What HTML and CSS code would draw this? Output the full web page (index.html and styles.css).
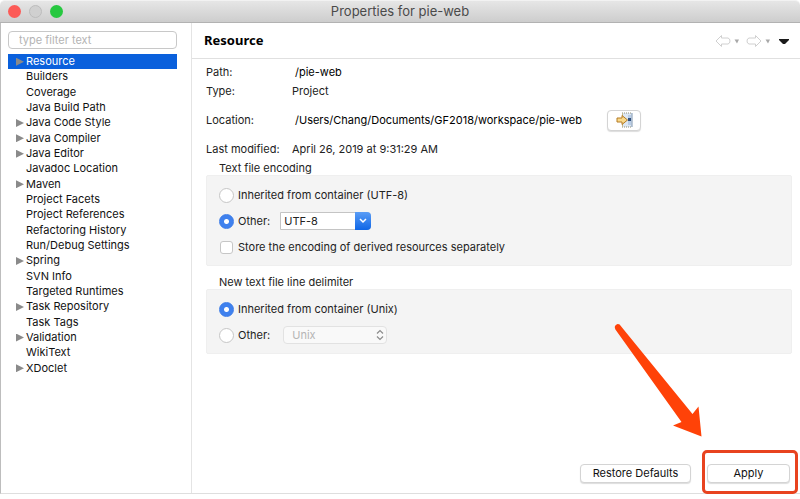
FILE: index.html
```html
<!DOCTYPE html>
<html lang="en">
<head>
  <meta charset="UTF-8">
  <meta name="viewport" content="width=device-width, initial-scale=1.0">
  <title>Properties for pie-web</title>
  <link rel="stylesheet" href="styles.css">
</head>
<body>
  <div class="window">
    <header class="titlebar">
      <div class="lights">
        <span class="light close"></span>
        <span class="light minimize"></span>
        <span class="light zoom"></span>
      </div>
      <h1 class="title">Properties for pie-web</h1>
    </header>

    <div class="content">
      <nav class="sidebar">
        <input class="filter" type="text" placeholder="type filter text" aria-label="type filter text">
        <ul class="tree">
          <li class="node parent selected">Resource</li>
          <li class="node">Builders</li>
          <li class="node">Coverage</li>
          <li class="node">Java Build Path</li>
          <li class="node parent">Java Code Style</li>
          <li class="node parent">Java Compiler</li>
          <li class="node parent">Java Editor</li>
          <li class="node">Javadoc Location</li>
          <li class="node parent">Maven</li>
          <li class="node">Project Facets</li>
          <li class="node">Project References</li>
          <li class="node">Refactoring History</li>
          <li class="node">Run/Debug Settings</li>
          <li class="node parent">Spring</li>
          <li class="node">SVN Info</li>
          <li class="node">Targeted Runtimes</li>
          <li class="node parent">Task Repository</li>
          <li class="node">Task Tags</li>
          <li class="node parent">Validation</li>
          <li class="node">WikiText</li>
          <li class="node parent">XDoclet</li>
        </ul>
      </nav>

      <main class="page">
        <div class="page-header">
          <h2 class="page-title">Resource</h2>
          <div class="history">
            <button class="tool" type="button" aria-label="Back" disabled>
              <svg width="24" height="14" viewBox="0 0 24 14">
                <path d="M1 7 L6.5 1.500 V4 H13 Q15 4.500 15 7 Q15 9.500 13 10 H6.500 V12.500 Z" fill="#fff" stroke="#d0d0d0"/>
                <path d="M19.500 5.500 H24 L22 9.500 Z" fill="#a8a8a8"/>
              </svg>
            </button>
            <button class="tool" type="button" aria-label="Forward" disabled>
              <svg width="24" height="14" viewBox="0 0 24 14">
                <path d="M15 7 L9.500 1.500 V4 H3 Q1 4.500 1 7 Q1 9.500 3 10 H9.500 V12.500 Z" fill="#fff" stroke="#d0d0d0"/>
                <path d="M19.500 5.500 H24 L22 9.500 Z" fill="#a8a8a8"/>
              </svg>
            </button>
            <button class="tool" type="button" aria-label="Menu">
              <svg width="10" height="14" viewBox="0 0 10 14">
                <path d="M0 5 H10 V6 L6 10 H4 L0 6 Z" fill="#1b1b1b"/>
              </svg>
            </button>
          </div>
        </div>

        <div class="page-body">
          <dl class="info">
            <dt>Path:</dt>
            <dd class="path">/pie-web</dd>
            <dt>Type:</dt>
            <dd>Project</dd>
            <dt>Location:</dt>
            <dd class="path location">
              /Users/Chang/Documents/GF2018/workspace/pie-web
              <button class="button show" type="button" aria-label="Show in system explorer">
                <svg width="17" height="16" viewBox="0 0 17 16">
                  <rect x="6" y="1" width="10" height="14" fill="#dce7f3"/>
                  <path d="M6 1 H16 M6 15 H16" stroke="#8f8f78" stroke-dasharray="1 1"/>
                  <path d="M6.5 1 V4 M6.5 12 V15" stroke="#c3b98c"/>
                  <path d="M16 1 V15" stroke="#7d93ae"/>
                  <rect x="12" y="3" width="3" height="10" fill="#b9cde6"/>
                  <rect x="12" y="6" width="3" height="3" fill="#31507c"/>
                  <path d="M1 6 H6 V3.5 L11.5 8 L6 12.5 V10 H1 Z" fill="#f9d98a" stroke="#b47b25"/>
                </svg>
              </button>
            </dd>
            <dt>Last modified:</dt>
            <dd>April 26, 2019 at 9:31:29 AM</dd>
          </dl>

          <fieldset class="group encoding">
            <legend>Text file encoding</legend>
            <div class="options">
              <div class="row">
                <input class="radio" type="radio" name="encoding" id="enc-inherit">
                <label for="enc-inherit">Inherited from container (UTF-8)</label>
              </div>
              <div class="row">
                <input class="radio" type="radio" name="encoding" id="enc-other" checked>
                <label for="enc-other">Other:</label>
                <div class="combo">
                  <select class="combo-field" aria-label="Encoding">
                    <option>UTF-8</option>
                    <option>UTF-16</option>
                    <option>ISO-8859-1</option>
                  </select>
                  <span class="combo-arrow">
                    <svg width="8" height="6" viewBox="0 0 8 6">
                      <path d="M1 1 L4 4 L7 1" fill="none" stroke="#fff" stroke-width="1.5"/>
                    </svg>
                  </span>
                </div>
              </div>
              <div class="row">
                <input class="check" type="checkbox" id="derived">
                <label for="derived">Store the encoding of derived resources separately</label>
              </div>
            </div>
          </fieldset>

          <fieldset class="group delimiter">
            <legend>New text file line delimiter</legend>
            <div class="options">
              <div class="row">
                <input class="radio" type="radio" name="delimiter" id="del-inherit" checked>
                <label for="del-inherit">Inherited from container (Unix)</label>
              </div>
              <div class="row">
                <input class="radio" type="radio" name="delimiter" id="del-other">
                <label for="del-other">Other:</label>
                <div class="popup">
                  <select class="popup-field" aria-label="Line delimiter" disabled>
                    <option>Unix</option>
                    <option>Windows</option>
                  </select>
                  <svg class="popup-arrows" width="8" height="12" viewBox="0 0 8 12">
                    <path d="M1 4.5 L4 1.5 L7 4.5 M1 7.5 L4 10.5 L7 7.5" fill="none" stroke="#8c8c8c" stroke-width="1.2"/>
                  </svg>
                </div>
              </div>
            </div>
          </fieldset>
        </div>

        <div class="actions">
          <button class="button restore" type="button">Restore Defaults</button>
          <div class="highlight">
            <button class="button apply" type="button">Apply</button>
          </div>
          <svg class="pointer" width="90" height="114" viewBox="0 0 90 114">
            <path d="M3.4 6.4 Q1.6 2.8 5 1.2 Q7.6 .6 9 3.2 L80.5 91 L86.5 83.5 L89.5 113.5 L61 102.5 L69.5 99 Z" fill="#ff4208"/>
          </svg>
        </div>
      </main>
    </div>
  </div>
</body>
</html>
```

FILE: styles.css
```css
* {
  box-sizing: border-box;
}
body {
  margin: 0;
  background: #fff;
  color: #222;
  font-family: Inter, 'Liberation Sans', sans-serif;
  font-size: 11px;
  line-height: 15px;
}
input, select, button {
  margin: 0;
  font: inherit;
  color: inherit;
}
.window {
  display: flex;
  flex-direction: column;
  min-height: 100vh;
  padding-bottom: 5px;
}

/* title bar */
.titlebar {
  display: flex;
  align-items: center;
  height: 23px;
  padding: 0 8px;
  background: linear-gradient(#e6e6e6, #cdcdcd);
  border-top: 1px solid #f2f2f2;
  border-bottom: 1px solid #b2b2b2;
  border-radius: 5px 5px 0 0;
}
.lights {
  display: flex;
  flex: 1;
  gap: 8px;
}
.titlebar::after {
  content: "";
  flex: 1;
}
.light {
  width: 13px;
  height: 13px;
  border-radius: 50%;
}
.close {
  background: #fc5b57;
}
.minimize {
  background: #d0d0d0;
  border: 1px solid #bcbcbc;
}
.zoom {
  background: #27c840;
}
.title {
  margin: 0;
  font-size: 13px;
  font-weight: 400;
  color: #4a4a4a;
}

.content {
  display: flex;
  flex: 1;
  border-left: 1px solid #bdbdbd;
  border-bottom: 1px solid #dedede;
}

/* tree */
.sidebar {
  flex: none;
  width: 191px;
  padding: 8px 14px 0 7px;
  border-right: 1px solid #e4e4e4;
}
.filter {
  display: block;
  width: 100%;
  height: 18px;
  padding: 0 10px;
  border: 1px solid #c8c8c8;
  border-radius: 4px;
  background: #fff;
}
.filter::placeholder {
  color: #b4b4b4;
}
.tree {
  display: flex;
  flex-direction: column;
  height: 322px;
  margin: 5px 0 0;
  padding: 0;
  list-style: none;
  color: #111;
}
.node {
  display: flex;
  flex: 1;
  align-items: center;
  padding-left: 18px;
}
.parent {
  padding-left: 8px;
}
.parent::before {
  content: "";
  width: 8px;
  height: 8px;
  margin-right: 2px;
  background: #8a8a8a;
  clip-path: polygon(0 0, 100% 50%, 0 100%);
}
.selected {
  background: #0a60dc;
  color: #fff;
}

/* page */
.page {
  display: flex;
  flex: 1;
  flex-direction: column;
  min-width: 0;
}
.page-header {
  display: flex;
  align-items: center;
  justify-content: space-between;
  height: 36px;
  padding: 0 11px 0 12px;
  border-bottom: 1px solid #e0e0e0;
}
.page-title {
  margin: 0;
  font-family: 'Noto Sans', 'Open Sans', sans-serif;
  font-size: 13px;
  font-weight: 700;
  color: #000;
}
.history {
  display: flex;
  gap: 7px;
}
.tool {
  display: flex;
  padding: 0;
  border: 0;
  background: none;
}
.tool:last-child {
  margin-left: 2px;
}
.page-body {
  padding: 3px 8px 0 14px;
}
.info {
  display: grid;
  grid-template-columns: 86px 1fr;
  grid-template-rows: 20px 19px 38px 20px;
  align-items: center;
  margin: 0;
}
.info dd {
  margin: 0;
}
.path {
  padding-left: 3px;
  color: #000;
}
.location {
  display: flex;
  align-items: center;
  gap: 25px;
}

/* option groups */
.group {
  min-width: 0;
  margin: 0;
  padding: 0;
  border: 0;
}
.group legend {
  padding: 0 13px;
  line-height: 14px;
}
.options {
  display: flex;
  flex-direction: column;
  padding: 6px 12px 5px;
  background: #f4f4f4;
  border: 1px solid #efefef;
  border-radius: 2px;
}
.encoding {
  margin-top: 2px;
}
.delimiter {
  margin-top: 9px;
}
.row {
  display: flex;
  align-items: center;
  gap: 4px;
  height: 26px;
}
.radio, .check {
  flex: none;
  appearance: none;
  width: 15px;
  height: 15px;
  border: 1px solid #c6c6c6;
  background: #fff;
}
.radio {
  border-radius: 50%;
}
.radio:checked {
  border-color: #3c7ce8;
  background: radial-gradient(circle, #fff 2px, #3f81ee 3px);
}
.check {
  width: 13px;
  height: 13px;
  margin: 0 1px;
  border-radius: 3px;
}
.combo {
  position: relative;
  width: 91px;
  margin-left: 6px;
}
.combo-field {
  display: block;
  appearance: none;
  width: 100%;
  height: 18px;
  padding: 0 3px;
  border: 1px solid #c4c4c4;
  border-radius: 0 4px 4px 0;
  background: #fff;
}
.combo-arrow {
  position: absolute;
  top: 0;
  right: 0;
  display: flex;
  align-items: center;
  justify-content: center;
  width: 16px;
  height: 18px;
  border-radius: 0 4px 4px 0;
  background: linear-gradient(#5a9df6, #0f66e6);
  pointer-events: none;
}
.popup {
  position: relative;
  width: 104px;
  margin-left: 9px;
}
.popup-field {
  display: block;
  appearance: none;
  width: 100%;
  height: 18px;
  padding: 0 8px;
  border: 1px solid #e2e2e2;
  border-radius: 4px;
  background: #f9f9f9;
  color: #b5b5b5;
  opacity: 1;
}
.popup-arrows {
  position: absolute;
  top: 3px;
  right: 3px;
  pointer-events: none;
}

/* buttons */
.button {
  height: 19px;
  padding: 0;
  border: 1px solid #d4d4d4;
  border-radius: 4px;
  background: #fff;
  box-shadow: 0 1px 1px #ddd;
  color: #111;
}
.show {
  display: flex;
  align-items: center;
  justify-content: center;
  width: 34px;
  height: 21px;
}
.actions {
  position: relative;
  display: flex;
  justify-content: flex-end;
  gap: 16px;
  margin-top: auto;
  padding: 0 10px 10px 0;
}
.restore {
  width: 111px;
}
.highlight {
  position: relative;
}
.apply {
  width: 83px;
}
/* red frame around the Apply button */
.highlight::after {
  content: "";
  position: absolute;
  inset: -14px -8px -11px -5px;
  border: 3px solid #e8431f;
  border-radius: 5px;
  pointer-events: none;
}
.pointer {
  position: absolute;
  right: 98px;
  bottom: 56px;
  pointer-events: none;
}
```
